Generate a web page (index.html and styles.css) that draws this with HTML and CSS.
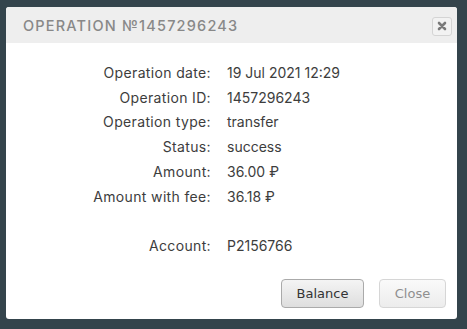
FILE: index.html
```html
<!DOCTYPE html>
<html>
<head>
<meta charset="utf-8">
<link rel="stylesheet" href="styles.css">
</head>
<body>
<div class="dialog">
  <div class="header">
    <span class="title">OPERATION №1457296243</span>
    <button class="x-btn" aria-label="close">
      <svg width="10" height="10" viewBox="0 0 10 10"><path d="M2 2 L8 8 M8 2 L2 8" stroke="#7a7a7a" stroke-width="2.6" stroke-linecap="round"/></svg>
    </button>
  </div>
  <div class="content">
    <div class="grid">
      <div class="lbl">Operation date:</div><div class="val">19 Jul 2021 12:29</div>
      <div class="lbl">Operation ID:</div><div class="val">1457296243</div>
      <div class="lbl">Operation type:</div><div class="val">transfer</div>
      <div class="lbl">Status:</div><div class="val">success</div>
      <div class="lbl">Amount:</div><div class="val">36.00 ₽</div>
      <div class="lbl">Amount with fee:</div><div class="val">36.18 ₽</div>
      <div class="lbl"></div><div class="val"></div>
      <div class="lbl">Account:</div><div class="val">P2156766</div>
    </div>
  </div>
  <div class="footer">
    <button class="btn">Balance</button>
    <button class="btn btn-light">Close</button>
  </div>
</div>
</body>
</html>
```
FILE: styles.css
```css
html, body { margin: 0; padding: 0; }
body {
  background: #34444c;
  width: 467px;
  height: 329px;
  padding: 7px 10px 10px 6px;
  box-sizing: border-box;
}
.dialog {
  background: #fff;
  border-radius: 3px;
  height: 312px;
  width: 451px;
  display: flex;
  flex-direction: column;
  overflow: hidden;
}
.header {
  background: #eeeeee;
  height: 36px;
  display: flex;
  align-items: center;
  justify-content: space-between;
  padding: 0 5px 0 17px;
  flex-shrink: 0;
}
.title {
  font-family: Inter, "Open Sans", sans-serif;
  font-size: 14.5px;
  font-weight: 500;
  letter-spacing: 1.2px;
  color: #888;
}
.x-btn {
  width: 20px;
  height: 19px;
  border: 1px solid #d4d4d4;
  border-radius: 3px;
  background: #f2f2f2;
  padding: 0;
  display: flex;
  align-items: center;
  justify-content: center;
  margin-top: 2px;
}
.content {
  flex: 1;
  padding-top: 17px;
}
.grid {
  display: grid;
  grid-template-columns: 205px 1fr;
  column-gap: 16px;
  grid-auto-rows: 24.8px;
  font-family: Inter, "Open Sans", sans-serif;
  font-size: 14px;
  color: #3d3d3d;
  align-items: center;
}
.lbl { text-align: right; letter-spacing: 0.35px; }
.val { letter-spacing: 0; }
.footer {
  display: flex;
  justify-content: flex-end;
  gap: 15px;
  padding: 0 11px 11px 0;
}
.btn {
  font-family: "DejaVu Sans", Verdana, sans-serif;
  font-size: 13px;
  height: 29px;
  width: 83px;
  border: 1px solid #aaa;
  border-radius: 4px;
  background: linear-gradient(#f4f4f4, #dedede);
  color: #333;
  padding: 0;
}
.btn-light {
  width: 67px;
  border-color: #d6d6d6;
  background: linear-gradient(#fafafa, #ececec);
  color: #8f8f8f;
}
```
